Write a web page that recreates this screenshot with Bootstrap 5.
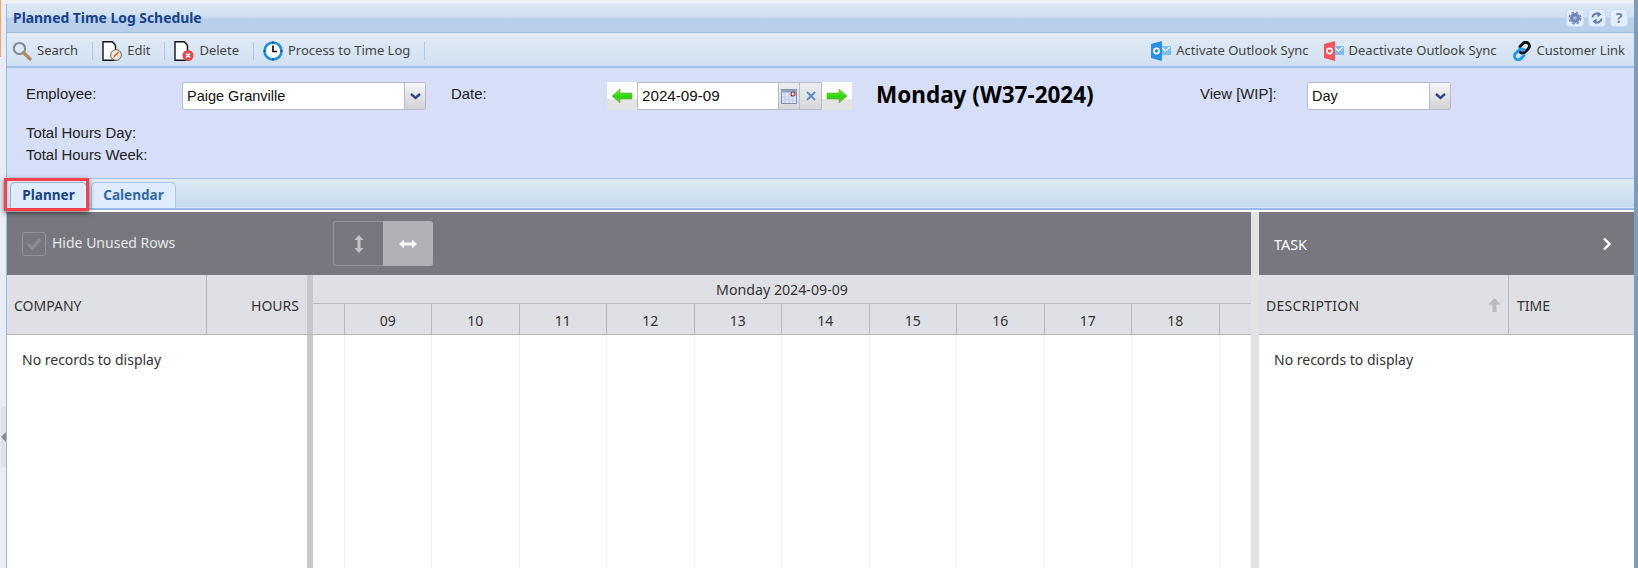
<!DOCTYPE html>
<html lang="en"><head><meta charset="utf-8"><title>Planned Time Log Schedule</title>
<link rel="stylesheet" href="https://cdn.jsdelivr.net/npm/bootstrap@5.3.0/dist/css/bootstrap.min.css">
<style>
html,body{height:568px;overflow:hidden;background:#e9ecf6}
body{font-family:"Noto Sans","Liberation Sans",sans-serif;font-size:14px;color:#333;position:relative}
.shell{height:568px;padding:4px 4px 0 6px;background:linear-gradient(#f0f0f0 0 3px,#e9ecf6 3px)}
.edge-o{position:absolute;left:0;top:0;width:1px;height:57px;background:#f3a45c}
.edge-r{position:absolute;right:0;top:0;width:4px;height:568px;background:#7f9db9}
.edge-t{position:absolute;left:0;right:4px;top:0;height:3px;background:#f0f0f0}
.grab{position:absolute;left:1px;top:407px;width:5px;height:60px;background:#dfe1e8}
.grab i{position:absolute;left:0;top:25px;border:5px solid transparent;border-left:0;border-right-color:#8a8a90}
.frame{height:564px;border-left:1px solid #94bbe8;display:flex;flex-direction:column}
.titlebar{height:29px;padding:0 6px 0 6px;background:linear-gradient(#dbe7f5 0,#d0e0f2 13px,#b9d0ec 14px,#b7cfeb 100%);border-bottom:1px solid #9bbde6}
.titletext{font-size:13.9px;font-weight:700;color:#15428b;margin-top:1px}
.tbtn{width:18px;height:18px;border:1px solid #c9dcf3;border-radius:4px;background:#e4eefb;display:flex;align-items:center;justify-content:center;margin-left:4px;font-size:14px;font-weight:700;color:#6a83bc;line-height:1}
.toolbar{height:35px;padding:3px 9px 0 5px;background:linear-gradient(#e2ebf6,#d0e0f0);border-bottom:2px solid #9fc0e8;font-size:13px;color:#444}
.tool{display:flex;align-items:center;gap:5px;white-space:nowrap}
.tsep{width:1px;height:18px;background:#a9c8ec;margin:0 9px 0 14px}
.filter{height:111px;background:#d6dff7;border-bottom:1px solid #a3c2e8;font-family:"Liberation Sans",sans-serif;font-size:14.9px;color:#222;padding:14px 0 0 19px}
.line1{height:28px}
.lbl{line-height:24px;white-space:nowrap}
.combo{height:28px;border:1px solid #b4bccf;background:#fff;display:flex;border-radius:2px;font-size:14.5px;color:#111}
.combo span.v{flex:1;padding:3px 0 0 4px}
.dd{width:21px;border-left:1px solid #b4bccf;background:linear-gradient(#f5f5f5,#d2d2d2);display:flex;align-items:center;justify-content:center}
.arr{width:30px;height:28px;background:linear-gradient(#fdfdfd 0 60%,#e4e4e4 60%);display:flex;align-items:center;justify-content:center;flex:none}
.dtinp{width:141px;height:28px;border:1px solid #b4bccf;border-right:0;background:#fff;padding:2px 0 0 4px;font-size:15.2px;color:#111;flex:none}
.dtb{width:22px;height:28px;border:1px solid #b4bccf;background:linear-gradient(#eee,#d8d8dc);display:flex;align-items:center;justify-content:center;flex:none}
.dayname{font-family:"Noto Sans",sans-serif;font-weight:700;font-size:22.5px;color:#000;line-height:25px;white-space:nowrap}
.totals{margin-top:12px;line-height:22px}
.tabstrip{height:29px;background:linear-gradient(#e0eaf6,#c6dbef);padding:3px 0 0 3px;gap:4px;border-bottom:1px solid #d7e6f6}
.tabitem{width:85px;height:26px;border:1px solid #a5c4ea;border-bottom:0;border-radius:5px 5px 0 0;background:#deecfc;color:#346aa8;display:flex;align-items:center;justify-content:center;font-weight:700;font-size:13.6px}
.tabitem.on{color:#15428b;width:77px;border-color:#9ab0c8}
.tabstrip2{height:4px;background:#fff;border-top:2px solid #94bbe8;border-bottom:0}
.redbox{position:absolute;left:4px;top:178px;width:85px;height:33px;border:3px solid #f4414a;box-shadow:0 2px 5px rgba(0,0,0,.55);z-index:3}
.work{flex:1;min-height:0;display:flex;background:#fff}
.pl{width:1244px;display:flex;flex-direction:column;flex:none}
.pr{flex:1;border-left:8px solid #e3e3e6;display:flex;flex-direction:column}
.graybar{height:63px;background:#77777f;color:#e8e8ea;flex:none}
.cbx{width:24px;height:24px;border:1px solid #93939a;border-radius:3px;display:flex;align-items:center;justify-content:center;margin:0 6px 0 15px}
.hideline{width:131px;white-space:nowrap;margin-top:-2px}
.seg{margin-left:150px;display:flex;height:45px;width:100px}
.seg>div{width:50px;display:flex;align-items:center;justify-content:center;border:1px solid #93939a}
.seg>div:first-child{border-right:0;border-radius:3px 0 0 3px}
.seg>div.sel{background:#b0b0b6;border:0;border-radius:0 3px 3px 0}
.heads{height:60px;flex:none;background:#dfe0e5;border-bottom:1px solid #b7b7bb;display:flex;color:#333;font-size:14px}
.hc{display:flex;align-items:center;height:100%;padding-top:1px}
.c1{width:200px;border-right:1px solid #b7b7bb;padding-left:7px}
.c2{width:100px;justify-content:flex-end;padding-right:8px}
.vs{width:6px;flex:none;background:#c8c8ce}
.tl{flex:1;display:flex;flex-direction:column}
.tlday{height:29px;border-bottom:1px solid #b7b7bb;display:flex;align-items:center;justify-content:center;font-size:14.2px;padding-top:2px}
.tlhrs{flex:1;display:flex}
.hr0{width:31.5px;flex:none;border-right:1px solid #b7b7bb}
.hr{width:87.5px;flex:none;border-right:1px solid #b7b7bb;display:flex;align-items:center;justify-content:center;padding-top:2px}
.bodyrow{flex:1;display:flex;min-height:0}
.none{padding:14px 0 0 15px;font-size:14px;color:#333}
.gl{flex:1;display:flex}
.g0{width:31.5px;flex:none;border-right:1px solid #f1f1f3}
.g{width:87.5px;flex:none;border-right:1px solid #f1f1f3}
.d1{width:250px;border-right:1px solid #b7b7bb;padding:1px 7px 0 7px;justify-content:space-between;letter-spacing:.25px}
.d2{padding-left:8px}
.tasklbl{color:#fff;padding-top:3px;font-size:14.4px}
</style></head>
<body>
<div class="edge-t"></div><div class="edge-o"></div><div class="edge-r"></div>
<div class="grab"><i></i></div>
<div class="redbox"></div>
<div class="shell"><div class="frame">

<div class="titlebar d-flex align-items-center justify-content-between">
  <div class="titletext">Planned Time Log Schedule</div>
  <div class="d-flex">
    <div class="tbtn"><svg width="14" height="14" viewBox="0 0 14 14"><circle cx="7" cy="7" r="5" fill="#6f86bf"/><circle cx="7" cy="7" r="5.800" fill="none" stroke="#6f86bf" stroke-width="1.400" stroke-dasharray="2.600 2"/><circle cx="7" cy="7" r="1.800" fill="#a9b9e0"/></svg></div>
    <div class="tbtn"><svg width="14" height="14" viewBox="0 0 14 14" fill="none" stroke="#5f7db3" stroke-width="2"><path d="M2.500 6.500A4 4 0 0 1 9 3.500"/><path d="M11.500 7.500A4 4 0 0 1 5 10.500"/><path d="M7.500 .5v6l4-3z" fill="#5f7db3" stroke="none"/><path d="M6.500 7.500v6l-4-3z" fill="#5f7db3" stroke="none"/></svg></div>
    <div class="tbtn">?</div>
  </div>
</div>

<div class="toolbar d-flex align-items-center">
  <div class="tool"><svg width="20" height="20" viewBox="0 0 20 20"><circle cx="7.500" cy="7.500" r="5.600" fill="#dfe8f2" stroke="#7c8794" stroke-width="2"/><path d="M11.500 11.500l6.500 6.500" stroke="#b58a54" stroke-width="3.200" stroke-linecap="round"/></svg>Search</div>
  <div class="tsep"></div>
  <div class="tool"><svg width="20" height="20" viewBox="0 0 20 20"><path d="M1 .8h9l3.500 3.500v14.900H1z" fill="#fff" stroke="#111" stroke-width="1.400"/><path d="M10 .8c2.500 0 3.500 2 2.800 4.500" fill="none" stroke="#555"/><circle cx="14" cy="14" r="5.400" fill="#efe6d8" stroke="#666"/><path d="M11.300 17l1-3 4-3.500 1 1-4 4z" fill="#e2681c"/></svg>Edit</div>
  <div class="tsep"></div>
  <div class="tool"><svg width="20" height="20" viewBox="0 0 20 20"><path d="M1 .8h9l3.500 3.500v14.900H1z" fill="#fff" stroke="#111" stroke-width="1.400"/><path d="M10 .8c2.500 0 3.500 2 2.800 4.500" fill="none" stroke="#555"/><circle cx="14" cy="14.500" r="5.500" fill="#e8474c"/><path d="M12 12.500l4 4m0-4l-4 4" stroke="#fff" stroke-width="1.700"/></svg>Delete</div>
  <div class="tsep"></div>
  <div class="tool"><svg width="20" height="20" viewBox="0 0 20 20"><circle cx="10" cy="10" r="8.500" fill="#fff" stroke="#1a8fe6" stroke-width="2.600"/><path d="M10 4.500V10.500H14" fill="none" stroke="#111" stroke-width="1.700"/><path d="M10 .5v2M10 17.500v2M.5 10h2M17.500 10h2" stroke="#111" stroke-width="1"/></svg>Process to Time Log</div>
  <div class="tsep"></div>
  <div class="ms-auto tool"><svg width="20" height="20" viewBox="0 0 20 20"><path d="M9 5h11v9H9z" fill="#7dbcf0"/><path d="M10 6l4.500 4L19 6" fill="none" stroke="#fff" stroke-width="1.200"/><path d="M0 3l11-3v20L0 17z" fill="#2a8fe8"/><circle cx="5.500" cy="10" r="2.600" fill="none" stroke="#fff" stroke-width="1.600"/></svg>Activate Outlook Sync</div>
  <div class="tool" style="margin-left:15px"><svg width="20" height="20" viewBox="0 0 20 20"><path d="M9 5h11v9H9z" fill="#7dbcf0"/><path d="M10 6l4.500 4L19 6" fill="none" stroke="#fff" stroke-width="1.200"/><path d="M0 3l11-3v20L0 17z" fill="#f2565c"/><circle cx="5.500" cy="10" r="2.600" fill="none" stroke="#fff" stroke-width="1.600"/></svg>Deactivate Outlook Sync</div>
  <div class="tool" style="margin-left:15px"><svg width="20" height="20" viewBox="0 0 20 20" fill="none" stroke-width="3" stroke-linecap="round"><path d="M8 5.500l3-3a3.500 3.500 0 0 1 5.500 5l-3.500 3.500a3.500 3.500 0 0 1-5 0" stroke="#111"/><path d="M12 14.500l-3 3a3.500 3.500 0 0 1-5.500-5L7 9a3.500 3.500 0 0 1 5 0" stroke="#1d9bf0"/></svg>Customer Link</div>
</div>

<div class="filter">
  <div class="line1 d-flex">
    <div class="lbl" style="width:156px">Employee:</div>
    <div class="combo" style="width:244px"><span class="v">Paige Granville</span><div class="dd"><svg width="11" height="7" viewBox="0 0 11 7"><path d="M1 1l4.500 4L10 1" fill="none" stroke="#2a4a86" stroke-width="2.400"/></svg></div></div>
    <div class="lbl" style="width:156px;margin-left:25px">Date:</div>
    <div class="d-flex" style="width:244px">
      <div class="arr"><svg width="22" height="16" viewBox="0 0 22 16"><defs><linearGradient id="gr" x1="0" y1="0" x2="0" y2="1"><stop offset="0" stop-color="#7df03a"/><stop offset=".55" stop-color="#25d60a"/><stop offset="1" stop-color="#7fbf3c"/></linearGradient></defs><path d="M1 8l8-7v4h12v6H9v4z" fill="url(#gr)" stroke="#6aa82c" stroke-width=".6"/></svg></div>
      <div class="dtinp">2024-09-09</div>
      <div class="dtb"><svg width="16" height="15" viewBox="0 0 16 15"><rect x=".5" y=".5" width="15" height="14" fill="#dce6f4" stroke="#7b8db0"/><rect x=".5" y=".5" width="15" height="3" fill="#8ea2c4"/><path d="M4 4v10M8 4v10M12 4v10M1 8h14M1 11h14" stroke="#b6c5dc" stroke-width=".7"/><circle cx="12" cy="5" r="2" fill="#fff" stroke="#b5202a" stroke-width="1.200"/></svg></div>
      <div class="dtb" style="border-left:0"><svg width="10" height="10" viewBox="0 0 10 10"><path d="M1 1l8 8m0-8l-8 8" stroke="#5d8ec6" stroke-width="2"/></svg></div>
      <div class="arr"><svg width="22" height="16" viewBox="0 0 22 16"><path d="M21 8l-8-7v4H1v6h12v4z" fill="url(#gr)" stroke="#6aa82c" stroke-width=".6"/></svg></div>
    </div>
    <div class="dayname" style="width:324px;margin-left:25px">Monday (W37-2024)</div>
    <div class="lbl" style="width:107px">View [WIP]:</div>
    <div class="combo" style="width:144px"><span class="v">Day</span><div class="dd"><svg width="11" height="7" viewBox="0 0 11 7"><path d="M1 1l4.500 4L10 1" fill="none" stroke="#2a4a86" stroke-width="2.400"/></svg></div></div>
  </div>
  <div class="totals">Total Hours Day:<br>Total Hours Week:</div>
</div>

<div class="tabstrip d-flex">
  <div class="tabitem on">Planner</div>
  <div class="tabitem">Calendar</div>
</div>
<div class="tabstrip2"></div>

<div class="work">
  <div class="pl">
    <div class="graybar d-flex align-items-center">
      <div class="cbx"><svg width="16" height="14" viewBox="0 0 16 14"><path d="M2 7l4.500 4.500L14 2" fill="none" stroke="#8d8d94" stroke-width="3"/></svg></div>
      <div class="hideline">Hide Unused Rows</div>
      <div class="seg">
        <div><svg width="10" height="18" viewBox="0 0 10 18" fill="#c4c4c8"><path d="M5 0l4.500 5H6.500v8H9.500L5 18 .5 13h3V5H.5z"/></svg></div>
        <div class="sel"><svg width="18" height="10" viewBox="0 0 18 10" fill="#fff"><path d="M0 5l5-4.500v3h8v-3L18 5l-5 4.500v-3H5v3z"/></svg></div>
      </div>
    </div>
    <div class="heads">
      <div class="hc c1">COMPANY</div>
      <div class="hc c2">HOURS</div>
      <div class="vs"></div>
      <div class="tl">
        <div class="tlday">Monday 2024-09-09</div>
        <div class="tlhrs">
          <div class="hr0"></div>
          <div class="hr">09</div><div class="hr">10</div><div class="hr">11</div><div class="hr">12</div><div class="hr">13</div><div class="hr">14</div><div class="hr">15</div><div class="hr">16</div><div class="hr">17</div><div class="hr">18</div>
        </div>
      </div>
    </div>
    <div class="bodyrow">
      <div style="width:300px" class="none">No records to display</div>
      <div class="vs"></div>
      <div class="gl"><div class="g0"></div><div class="g"></div><div class="g"></div><div class="g"></div><div class="g"></div><div class="g"></div><div class="g"></div><div class="g"></div><div class="g"></div><div class="g"></div><div class="g"></div></div>
    </div>
  </div>
  <div class="pr">
    <div class="graybar d-flex align-items-center justify-content-between" style="padding:0 22px 0 15px"><span class="tasklbl">TASK</span><svg width="10" height="14" viewBox="0 0 10 14"><path d="M2 1.500l5.500 5.500L2 12.500" fill="none" stroke="#fff" stroke-width="2.400"/></svg></div>
    <div class="heads">
      <div class="hc d1">DESCRIPTION<svg width="13" height="14" viewBox="0 0 13 14"><path d="M6.500 0l6 6.500H8.500V14h-4V6.500H.5z" fill="#b9b9be"/></svg></div>
      <div class="hc d2">TIME</div>
    </div>
    <div class="none">No records to display</div>
  </div>
</div>
</div></div>
</body></html>
